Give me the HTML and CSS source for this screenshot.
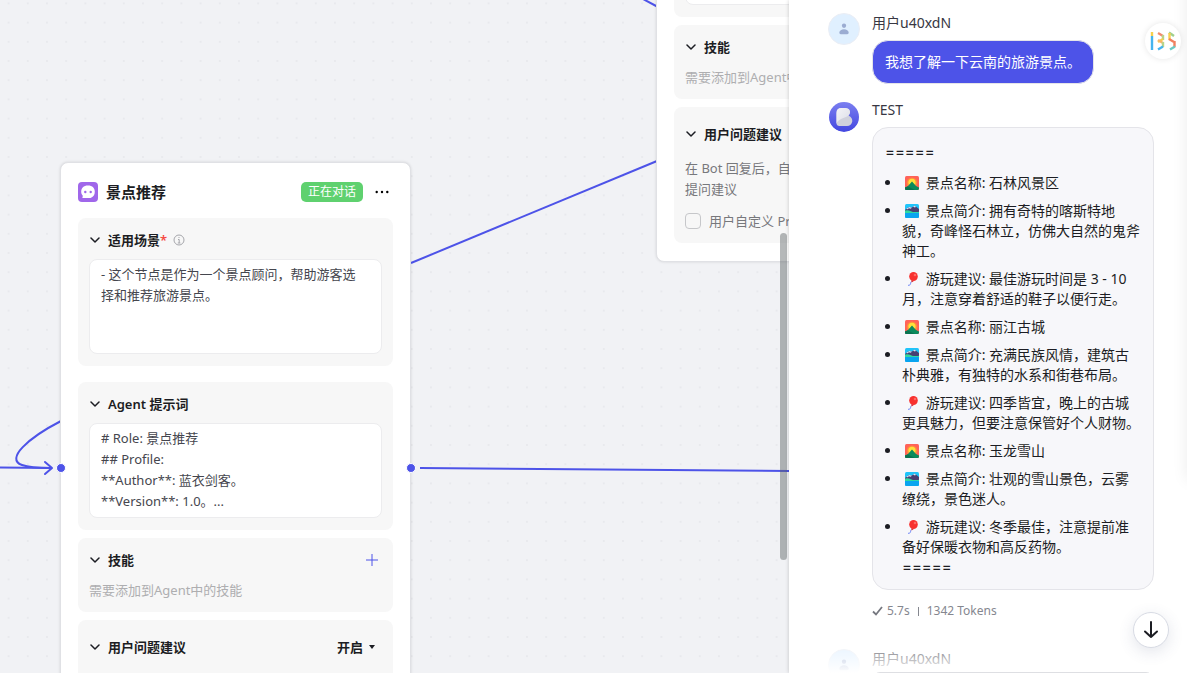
FILE: index.html
```
<!DOCTYPE html>
<html lang="zh-CN">
<head>
  <meta charset="UTF-8">
  <meta name="viewport" content="width=device-width, initial-scale=1.0">
  <title>景点推荐</title>
  <link rel="stylesheet" href="styles.css">
</head>
<body>
  <svg class="sprite" aria-hidden="true">
    <symbol id="chevron" viewBox="0 0 10 10">
      <path d="M1 3l4 4 4-4" fill="none" stroke="currentColor" stroke-width="1.5" stroke-linecap="round" stroke-linejoin="round"/>
    </symbol>
    <symbol id="sunrise" viewBox="0 0 14 14">
      <rect width="14" height="14" rx="1.5" fill="#ff6259"/>
      <circle cx="7" cy="7" r="5.4" fill="#ff8b3d"/>
      <circle cx="7" cy="6.4" r="3.6" fill="#ffe13a"/>
      <path d="M0 11.500l3-1.500 4-4.500L11 10l3 1.500v1q0 1.500-1.500 1.500h-11Q0 14 0 12.500z" fill="#0c8a5c"/>
      <path d="M0 11.500l3-1 3 1.500 4 2H1.500Q0 14 0 12.500z" fill="#0a7350"/>
    </symbol>
    <symbol id="park" viewBox="0 0 14 14">
      <rect width="14" height="14" rx="1.500" fill="#1fc4fa"/>
      <path d="M0 6l3-2.500 2-.5 2 .5L9.500 1.500 14 5v3H0z" fill="#483f72"/>
      <path d="M1.500 4.500l3-1.500 2.500.7-1.500 1-1.500-.4L2 5.500zM8 2.700l1.500-1.200L11 2.700l-1 .8z" fill="#d5e6f6"/>
      <path d="M0 6.500q3-1 6 .8t8 .4V10H0z" fill="#2fd8a0"/>
      <path d="M0 9h14v3.500q0 1.500-1.500 1.500h-11Q0 14 0 12.500z" fill="#09a4ef"/>
    </symbol>
    <symbol id="balloon" viewBox="0 0 14 14">
      <path d="M6.500 9.500c-1 .5-.7 1.500-1 2.500s-1 1.300-2.500 1.300" fill="none" stroke="#6f86f5" stroke-width="1"/>
      <ellipse cx="8.500" cy="4.500" rx="4.300" ry="4.500" fill="#f8312f"/>
      <path d="M6.500 8l2.200 1.200-2.200 1.300z" fill="#d8262a"/>
      <circle cx="10" cy="3" r="1.300" fill="#ff6a62"/>
    </symbol>
    <symbol id="person" viewBox="0 0 32 32">
      <circle cx="16" cy="12.500" r="2.300" fill="#9bacd2"/>
      <path d="M11 20c0-5 10-5 10 0q0 1.500-1.500 1.500h-7Q11 21.500 11 20z" fill="#9bacd2"/>
    </symbol>
  </svg>

  <div class="app">
    <main class="canvas">
      <svg class="edges" aria-hidden="true">
        <defs>
          <pattern id="dots" x="-1" y="13" width="19.2" height="19.2" patternUnits="userSpaceOnUse">
            <circle cx="9.600" cy="9.600" r="1" fill="#e6e7eb"/>
          </pattern>
        </defs>
        <rect width="100%" height="100%" fill="url(#dots)"/>
        <g fill="none" stroke="#4d53e8" stroke-width="2">
          <path d="M0 467.500L51 468"/>
          <path d="M61 421C28 438 5 459 22 465C30 468 40 468 51 468"/>
          <path d="M45 462l7 6-7 6" stroke-linejoin="round" stroke-linecap="round"/>
          <path d="M411 263L657 161"/>
          <path d="M643 -1L658 7"/>
          <path d="M420 468L800 471"/>
        </g>
      </svg>

      <section class="node node-current">
        <header class="node-head">
          <svg class="node-icon" viewBox="0 0 20 20" aria-hidden="true">
            <rect width="20" height="20" rx="4" fill="#a067ea"/>
            <path d="M10 3.500c4.500 0 6.800 2.600 6.800 6.200 0 3.200-1.600 5.300-4.300 6.300H4.800q-.8-.3-.3-1.200l.5-.9C3.800 12.700 3.200 11.400 3.200 9.700 3.200 6.100 5.500 3.500 10 3.500z" fill="#fff"/>
            <circle cx="7.300" cy="10" r="1.200" fill="#a067ea"/>
            <circle cx="12.700" cy="10" r="1.200" fill="#a067ea"/>
          </svg>
          <h2>景点推荐</h2>
          <span class="status">正在对话</span>
          <button class="icon-btn more" aria-label="更多">
            <svg width="14" height="4" viewBox="0 0 14 4"><circle cx="1.700" cy="2" r="1.200"/><circle cx="7" cy="2" r="1.200"/><circle cx="12.300" cy="2" r="1.200"/></svg>
          </button>
        </header>

        <div class="panel panel-scene">
          <div class="panel-head">
            <svg class="chevron"><use href="#chevron"/></svg>
            <label for="scene">适用场景<span class="required">*</span></label>
            <svg class="info" viewBox="0 0 12 12" fill="none" stroke="#a5a6ab" aria-hidden="true"><circle cx="6" cy="6" r="5"/><path d="M5 5.500h1.200V9M4.800 9h2.600M6 3v1"/></svg>
          </div>
          <textarea id="scene">- 这个节点是作为一个景点顾问，帮助游客选择和推荐旅游景点。</textarea>
        </div>

        <div class="panel">
          <div class="panel-head">
            <svg class="chevron"><use href="#chevron"/></svg>
            <label for="prompt">Agent 提示词</label>
          </div>
          <textarea id="prompt"># Role: 景点推荐
## Profile:
**Author**: 蓝衣剑客。
**Version**: 1.0。...</textarea>
        </div>

        <div class="panel">
          <div class="panel-head">
            <svg class="chevron"><use href="#chevron"/></svg>
            <h3>技能</h3>
            <button class="icon-btn add" aria-label="添加技能">
              <svg width="12" height="12" viewBox="0 0 12 12" stroke="#4d53e8"><path d="M6 0v12M0 6h12"/></svg>
            </button>
          </div>
          <p class="hint">需要添加到Agent中的技能</p>
        </div>

        <div class="panel panel-open">
          <div class="panel-head tall">
            <svg class="chevron"><use href="#chevron"/></svg>
            <h3>用户问题建议</h3>
            <div class="toggle">
              <select aria-label="用户问题建议">
                <option>开启</option>
                <option>关闭</option>
              </select>
              <span class="caret"></span>
            </div>
          </div>
        </div>
      </section>

      <section class="node node-next">
        <div class="panel">
          <div class="panel-head"></div>
          <textarea aria-label="Agent 提示词"></textarea>
        </div>

        <div class="panel">
          <div class="panel-head">
            <svg class="chevron"><use href="#chevron"/></svg>
            <h3>技能</h3>
          </div>
          <p class="hint">需要添加到Agent中的技能</p>
        </div>

        <div class="panel">
          <div class="panel-head tall">
            <svg class="chevron"><use href="#chevron"/></svg>
            <h3>用户问题建议</h3>
          </div>
          <p class="desc">在 Bot 回复后，自动根据对话内容提供 3 条用户<br>提问建议</p>
          <label class="check"><input type="checkbox">用户自定义 Prompt</label>
        </div>
      </section>

      <span class="port port-in"></span>
      <span class="port port-out"></span>
      <div class="scrollbar"></div>
    </main>

    <aside class="chat">
      <div class="messages">
        <article class="message">
          <svg class="avatar avatar-user"><use href="#person"/></svg>
          <div class="body">
            <div class="name">用户u40xdN</div>
            <div class="bubble bubble-user">我想了解一下云南的旅游景点。</div>
          </div>
        </article>

        <article class="message">
          <svg class="avatar" viewBox="0 0 32 32" aria-hidden="true">
            <defs>
              <linearGradient id="bot" x2="0" y2="1"><stop stop-color="#7b7ff0"/><stop offset="1" stop-color="#4347e0"/></linearGradient>
              <linearGradient id="leaf" x2="1" y2="1"><stop stop-color="#f4f4f8"/><stop offset="1" stop-color="#dcdde6"/></linearGradient>
            </defs>
            <circle cx="16" cy="17" r="15" fill="url(#bot)"/>
            <path d="M8.500 13q0-5 5-5H17c5 0 6.500 4.500 3.500 7.500 6 2.500 4.500 10.500-1.500 10.500h-7.500q-3 0-3-3z" fill="#d0d1dc"/>
            <path d="M8.500 13q0-5 5-5H17c5 0 6.500 4.500 3.500 7.500C17 18 9.500 19 8.500 24z" fill="url(#leaf)"/>
          </svg>
          <div class="body">
            <div class="name">TEST</div>
            <div class="bubble bubble-bot">
              <p class="rule">=====</p>
              <ul>
                <li><svg class="emoji"><use href="#sunrise"/></svg> 景点名称: 石林风景区</li>
                <li><svg class="emoji"><use href="#park"/></svg> 景点简介: 拥有奇特的喀斯特地貌，奇峰怪石林立，仿佛大自然的鬼斧神工。</li>
                <li><svg class="emoji"><use href="#balloon"/></svg> 游玩建议: 最佳游玩时间是 3 - 10 月，注意穿着舒适的鞋子以便行走。</li>
                <li><svg class="emoji"><use href="#sunrise"/></svg> 景点名称: 丽江古城</li>
                <li><svg class="emoji"><use href="#park"/></svg> 景点简介: 充满民族风情，建筑古朴典雅，有独特的水系和街巷布局。</li>
                <li><svg class="emoji"><use href="#balloon"/></svg> 游玩建议: 四季皆宜，晚上的古城更具魅力，但要注意保管好个人财物。</li>
                <li><svg class="emoji"><use href="#sunrise"/></svg> 景点名称: 玉龙雪山</li>
                <li><svg class="emoji"><use href="#park"/></svg> 景点简介: 壮观的雪山景色，云雾缭绕，景色迷人。</li>
                <li><svg class="emoji"><use href="#balloon"/></svg> 游玩建议: 冬季最佳，注意提前准备好保暖衣物和高反药物。<div class="rule">=====</div></li>
              </ul>
            </div>
            <div class="stats">
              <svg width="11" height="10" viewBox="0 0 11 10" fill="none" stroke="#75777f" stroke-width="1.800"><path d="M1 5.500l3 3L10 1"/></svg>
              <span>5.7s</span>
              <span class="bar"></span>
              <span>1342 Tokens</span>
            </div>
          </div>
        </article>

        <article class="message">
          <svg class="avatar avatar-user"><use href="#person"/></svg>
          <div class="body">
            <div class="name">用户u40xdN</div>
          </div>
        </article>
      </div>

      <div class="fade"></div>
      <div class="composer"></div>
      <div class="edge-shade"></div>

      <button class="float-btn logo" aria-label="135">
        <svg width="26" height="20" viewBox="0 0 26 20" fill="none" stroke-width="2.400">
          <path d="M2 5v14" stroke="#45b4ee"/>
          <path d="M2 1v4" stroke="#f7d04e"/>
          <path d="M8 2l5 3" stroke="#f28a6c"/>
          <path d="M13 4v5" stroke="#b9d48b"/>
          <path d="M8 11l5-3" stroke="#f9cf4f"/>
          <path d="M8 9l5 3" stroke="#f7b66a"/>
          <path d="M13 11v5" stroke="#b9d48b"/>
          <path d="M13 15.500l-5 3" stroke="#45b4ee"/>
          <path d="M24 5l-5-3.500" stroke="#9fd08e"/>
          <path d="M19.500 2v7" stroke="#f9cf4f"/>
          <path d="M19 8l5 3" stroke="#f2805f"/>
          <path d="M24.500 10v6" stroke="#f2805f"/>
          <path d="M25 15.500l-5 3" stroke="#6cc9c4"/>
        </svg>
      </button>
      <button class="float-btn to-bottom" aria-label="滚动到底部">
        <svg width="16" height="18" viewBox="0 0 16 18" fill="none" stroke="#1c1d23" stroke-width="2" stroke-linecap="round" stroke-linejoin="round"><path d="M8 1v15M2 10.500L8 16l6-5.500"/></svg>
      </button>
    </aside>
  </div>
</body>
</html>
```
FILE: styles.css
```
* {
  box-sizing: border-box;
}
body {
  margin: 0;
  font-family: "Noto Sans", "Noto Sans CJK SC", sans-serif;
  font-size: 13px;
  line-height: 20px;
  color: #1c1d23;
}
h2, h3, p, ul {
  margin: 0;
}
button, select, textarea {
  font-family: inherit;
  color: inherit;
}
.sprite {
  position: absolute;
  width: 0;
  height: 0;
}
.app {
  display: flex;
  height: 100vh;
  overflow: hidden;
}

/* workflow canvas */
.canvas {
  position: relative;
  flex: 1;
  overflow: hidden;
  background: #f1f2f5;
}
.edges {
  position: absolute;
  inset: 0;
  width: 100%;
  height: 100%;
}
.node {
  position: absolute;
  width: 351px;
  padding: 18px 17px;
  background: #fff;
  border: 1px solid #e0e1e5;
  border-radius: 8px;
  box-shadow: 0 0 3px rgba(0, 0, 0, 0.12);
}
.node-current {
  left: 60px;
  top: 162px;
}
.node-next {
  left: 656px;
  top: -150px;
}
.node-head {
  display: flex;
  align-items: center;
  height: 22px;
  margin-bottom: 15px;
}
.node-icon {
  width: 20px;
  height: 20px;
}
h2 {
  margin-left: 8px;
  font-size: 15px;
  font-weight: 600;
}
h3, .panel-head label {
  font-size: 13px;
  font-weight: 600;
}
.status {
  margin-left: auto;
  padding: 0 7px;
  border-radius: 5px;
  background: #5fd16f;
  color: #fff;
  font-size: 12px;
}
.icon-btn {
  display: flex;
  padding: 0;
  border: none;
  background: none;
  cursor: pointer;
}
.more {
  margin: 0 4px 0 12px;
}
.panel {
  padding: 12px 11px;
  border-radius: 8px;
  background: #f7f7f7;
}
.panel + .panel {
  margin-top: 8px;
}
.panel-scene + .panel {
  margin-top: 16px;
}
.panel-open {
  min-height: 136px;
}
.panel-head {
  display: flex;
  align-items: center;
  height: 20px;
}
.tall {
  height: 30px;
}
.chevron {
  width: 10px;
  height: 10px;
  margin: 0 8px 0 1px;
}
.required {
  color: #f54a45;
}
.info {
  width: 12px;
  height: 12px;
  margin-left: 6px;
}
.add {
  margin: 0 4px 0 auto;
}
textarea {
  display: block;
  width: 100%;
  height: 95px;
  margin-top: 9px;
  padding: 4px 16px 4px 11px;
  border: 1px solid #ececee;
  border-radius: 8px;
  background: #fff;
  color: #45464e;
  font-size: 13px;
  line-height: 21px;
  resize: none;
  overflow: hidden;
}
.hint {
  margin-top: 10px;
  color: #aeaeb0;
}
.desc {
  margin-top: 9px;
  color: #77787c;
  line-height: 21px;
}
.check {
  display: flex;
  align-items: center;
  margin-top: 11px;
  color: #77787c;
}
.check input {
  appearance: none;
  width: 16px;
  height: 16px;
  margin: 0 8px 0 0;
  border: 1px solid #c6c7ca;
  border-radius: 4px;
}
.toggle {
  display: flex;
  align-items: center;
  gap: 5px;
  margin: 0 7px 0 auto;
}
.toggle select {
  appearance: none;
  padding: 0;
  border: none;
  background: none;
  font-size: 13px;
  font-weight: 600;
}
.caret {
  border: 3px solid transparent;
  border-top: 4px solid #1c1d23;
  border-bottom: none;
}
.port {
  position: absolute;
  width: 10px;
  height: 10px;
  border: 1px solid #fff;
  border-radius: 50%;
  background: #4d53e8;
}
.port-in {
  left: 56px;
  top: 463px;
}
.port-out {
  left: 406px;
  top: 463px;
}
.scrollbar {
  position: absolute;
  right: 2px;
  top: 233px;
  width: 7px;
  height: 327px;
  border-radius: 4px;
  background: rgba(90, 97, 100, 0.45);
}

/* chat preview */
.chat {
  position: relative;
  flex: 0 0 398px;
  overflow: hidden;
  background: #fff;
  box-shadow: 0 0 4px rgba(0, 0, 0, 0.2);
  font-size: 14px;
}
.messages {
  padding: 13px 33px 0 39px;
}
.message {
  display: flex;
  gap: 12px;
  margin-bottom: 16px;
}
.avatar {
  flex: none;
  width: 32px;
  height: 32px;
  border-radius: 50%;
}
.avatar-user {
  border: 1px solid #ebeef5;
  background: #e0f0ff;
}
.body {
  flex: 1;
}
.name {
  margin-bottom: 7px;
  color: #383743;
}
.bubble {
  border: 1px solid #e4e4e9;
  border-radius: 16px;
}
.bubble-user {
  width: fit-content;
  padding: 11px 12px;
  background: #4d53e8;
  color: #fff;
}
.bubble-bot {
  padding: 14px 12px 12px;
  background: #f7f7fa;
}
.rule {
  font-family: Inter, "Noto Sans", sans-serif;
  font-size: 15px;
}
ul {
  margin-top: 11px;
  padding-left: 17px;
}
li + li {
  margin-top: 8px;
}
.emoji {
  width: 14px;
  height: 14px;
  margin: 0 3px 0 3px;
  vertical-align: -2px;
}
.stats {
  display: flex;
  align-items: center;
  gap: 4px;
  margin: 11px 0 12px;
  color: #85878f;
  font-size: 12px;
}
.bar {
  width: 1px;
  height: 9px;
  margin: 0 4px;
  background: #85878f;
}
.fade {
  position: absolute;
  inset: auto 0 0 0;
  height: 40px;
  background: linear-gradient(rgba(255, 255, 255, 0), #fff);
}
.composer {
  position: absolute;
  left: 83px;
  right: 33px;
  bottom: -39px;
  height: 40px;
  border: 1px solid #dedfe3;
  border-radius: 8px;
}
.edge-shade {
  position: absolute;
  top: -40px;
  right: -20px;
  width: 20px;
  height: 520px;
  box-shadow: 0 0 16px rgba(0, 0, 0, 0.08);
}
.float-btn {
  position: absolute;
  display: flex;
  align-items: center;
  justify-content: center;
  width: 36px;
  height: 36px;
  padding: 0;
  border: none;
  border-radius: 50%;
  background: #fff;
  cursor: pointer;
}
.logo {
  top: 23px;
  right: 6px;
  box-shadow: 0 0 6px rgba(0, 0, 0, 0.1);
}
.to-bottom {
  right: 18px;
  bottom: 25px;
  border: 1px solid #d8dbe4;
  box-shadow: 0 4px 16px rgba(60, 70, 110, 0.14);
}
```
